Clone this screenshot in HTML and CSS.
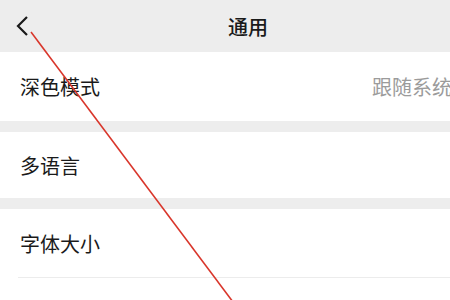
FILE: index.html
```html
<!DOCTYPE html>
<html lang="zh-CN">
<head>
    <meta charset="UTF-8">
    <meta name="viewport" content="width=device-width, initial-scale=1.0">
    <title>通用</title>
    <link rel="stylesheet" href="styles.css">
</head>
<body>
    <div class="page">
        <div class="header">
            <svg class="back" width="16" height="24" viewBox="0 0 16 24">
                <path d="M12 3 L3 12 L12 21" fill="none" stroke="#1a1a1a" stroke-width="2.2"/>
            </svg>
            <h1>通用</h1>
        </div>

        <div class="group">
            <div class="row row-first">
                <span class="label">深色模式</span>
                <span class="value">跟随系统</span>
            </div>
        </div>

        <div class="group">
            <div class="row row-second">
                <span class="label">多语言</span>
            </div>
        </div>

        <div class="group">
            <div class="row row-third">
                <span class="label">字体大小</span>
            </div>
            <div class="row row-faded">
                <span class="label">聊天背景</span>
            </div>
        </div>

        <!-- red annotation line drawn over the screenshot -->
        <svg class="mark" width="450" height="300" viewBox="0 0 450 300">
            <line x1="31" y1="32" x2="233" y2="302" stroke="#d9362b" stroke-width="1.6"/>
        </svg>
    </div>
</body>
</html>
```

FILE: styles.css
```css
body {
    margin: 0;
    font-family: "Noto Sans CJK SC", "Noto Sans", sans-serif;
    background-color: #ededed;
}
.page {
    position: relative;
    width: 450px;
    height: 300px;
    overflow: hidden;
}
.header {
    position: relative;
    height: 52px;
    display: flex;
    align-items: center;
    justify-content: center;
    background-color: #ededed;
}
.header h1 {
    margin: 0;
    padding-left: 46px;
    font-size: 20px;
    font-weight: 500;
    color: #1a1a1a;
}
.back {
    position: absolute;
    left: 15px;
    top: 14px;
}
.group {
    background: white;
    margin-bottom: 11px;
}
.row {
    display: flex;
    align-items: center;
    justify-content: space-between;
    padding-left: 20px;
    white-space: nowrap;
}
.row-first {
    height: 69px;
}
.row-second {
    height: 66px;
}
.row-third {
    height: 68px;
    margin-left: 18px;
    padding-left: 2px;
    border-bottom: 1px solid #ececec;
}
.row-faded {
    height: 40px;
    align-items: flex-end;
    padding-left: 17px;
}
.row-faded .label {
    color: #ececec;
    font-size: 18px;
    line-height: 1;
    margin-bottom: -8px;
}
.label {
    font-size: 20px;
    color: #1a1a1a;
}
.value {
    font-size: 20px;
    color: #9b9b9b;
    margin-right: -2px;
}
.mark {
    position: absolute;
    left: 0;
    top: 0;
    pointer-events: none;
}
```
